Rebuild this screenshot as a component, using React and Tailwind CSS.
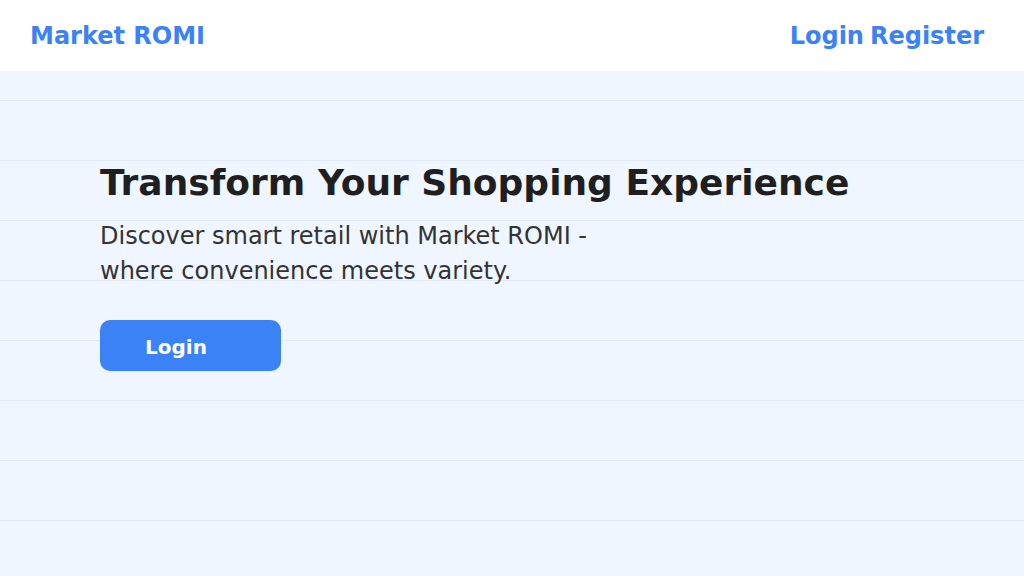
export default function App() {
  return (
    <div className="min-h-[576px] w-full flex flex-col font-['DejaVu_Sans',sans-serif]">
      <header className="h-[71px] bg-white flex items-center justify-between pl-[30px] pr-[40px]">
        <div className="text-[24px] font-bold text-[#3b82f6]">Market ROMI</div>
        <nav className="flex gap-[6px] text-[24px] font-bold text-[#3b82f6]">
          <a>Login</a>
          <a>Register</a>
        </nav>
      </header>
      <main className="flex-1 h-[505px] bg-[#eff6ff] bg-[linear-gradient(to_bottom,#dfe9f7_0px,#dfe9f7_1px,transparent_1px)] bg-[length:100%_60px] bg-[position:0_29px] pl-[100px]">
        <h1 className="mt-[90px] text-[36px] leading-[43px] font-bold text-[#1f1f1f]">
          Transform Your Shopping Experience
        </h1>
        <p className="mt-[15px] max-w-[530px] text-[24px] leading-[35px] text-[#333333]">
          Discover smart retail with Market ROMI - where convenience meets variety.
        </p>
        <button className="mt-[31px] w-[181px] h-[51px] rounded-[10px] bg-[#3b82f6] text-white text-[20px] font-bold text-left pl-[45px] pt-[2px]">
          Login
        </button>
      </main>
    </div>
  );
}
